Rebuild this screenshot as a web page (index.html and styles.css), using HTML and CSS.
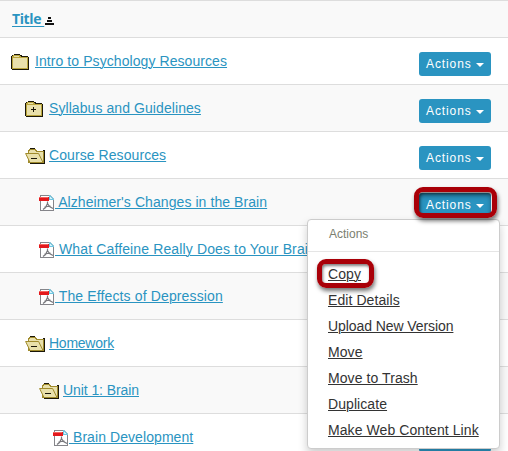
FILE: index.html
```html
<!DOCTYPE html>
<html lang="en">
<head>
<meta charset="utf-8">
<title>Resources</title>
<link rel="stylesheet" href="styles.css">
</head>
<body>
<svg class="defs" shape-rendering="crispEdges">
  <symbol id="folder" viewBox="0 0 18 16">
    <path fill="#1a1608" d="M3 0h6v1h2v1h6v1h1v13H1v-1H0V2h1V1h2z"/>
    <path fill="#b9a53c" d="M2 1h7v1h1v1h7v12H1V2h1z"/>
    <path fill="#e9e0ab" d="M2 4h14v10H2zM3 2h5v1H3z"/>
  </symbol>
  <symbol id="folder-plus" viewBox="0 0 18 16">
    <use href="#folder" width="18" height="16"/>
    <path fill="#1a1608" d="M6 8h5v1H6zM8 6h1v5H8z"/>
  </symbol>
  <symbol id="folder-open" viewBox="0 0 20 16">
    <path fill="#1a1608" d="M5 0h5v1H5zM18 2h2v14H5v-1h13z"/>
    <path fill="#a08b2c" d="M3 2h1V1h7v1h1v1h7v12H3z"/>
    <path fill="#e9e0ab" d="M4 3h1V2h5v1h1v1h7v10H4z"/>
    <path class="flap" d="M.6 5.500h13l4.400 9H5z"/>
    <path fill="#1a1608" d="M6 10h6v1H6z"/>
  </symbol>
  <symbol id="pdf" viewBox="0 0 15 16">
    <path fill="#85858a" d="M1 0h10l4 4v12H1z"/>
    <path fill="#fff" d="M2 1h8v4h4v10H2z"/>
    <path fill="#6fc5e0" d="M10 0h1l4 4v1h-5z"/>
    <path fill="#d8f3fa" d="M11 2h1v1h1v1h-2z"/>
    <path fill="#e3191d" d="M0 2h10v4H0z"/>
    <path fill="#f4645f" d="M0 2h9v1H0z"/>
    <path class="swash" d="M8.500 6.500v2l-2 4-2.500 2M8.500 8.500l2 3 3.500 2M5.500 12l6-1"/>
  </symbol>
</svg>
<main class="table">
  <header class="head"><a href="#">Title&nbsp;</a><svg class="sort" viewBox="0 0 9 8" shape-rendering="crispEdges"><path d="M3 0h3v2H3zM2 3h5v2H2zM0 6h9v2H0z"/></svg></header>
  <div class="row"><svg class="closed"><use href="#folder"/></svg><a href="#">Intro to Psychology Resources</a><button>Actions<i></i></button></div>
  <div class="row level1"><svg class="closed"><use href="#folder-plus"/></svg><a href="#">Syllabus and Guidelines</a><button>Actions<i></i></button></div>
  <div class="row level1"><svg class="open"><use href="#folder-open"/></svg><a href="#">Course Resources</a><button>Actions<i></i></button></div>
  <div class="row level2"><svg class="pdf"><use href="#pdf"/></svg><a href="#"> Alzheimer's Changes in the Brain</a>
    <div class="anchor"><button class="active">Actions<i></i></button><span class="ring"></span>
      <div class="menu">
        <h2>Actions</h2>
        <ul>
          <li><a href="#">Copy</a><span class="ring copy"></span></li>
          <li><a href="#">Edit Details</a></li>
          <li><a class="tight" href="#">Upload New Version</a></li>
          <li><a href="#">Move</a></li>
          <li><a href="#">Move to Trash</a></li>
          <li><a href="#">Duplicate</a></li>
          <li><a href="#">Make Web Content Link</a></li>
        </ul>
      </div>
    </div>
  </div>
  <div class="row level2"><svg class="pdf"><use href="#pdf"/></svg><a class="wide" href="#"> What Caffeine Really Does to Your Brain</a></div>
  <div class="row level2"><svg class="pdf"><use href="#pdf"/></svg><a class="wide" href="#"> The Effects of Depression</a></div>
  <div class="row level1"><svg class="open"><use href="#folder-open"/></svg><a class="tighter" href="#">Homework</a></div>
  <div class="row level2"><svg class="open"><use href="#folder-open"/></svg><a class="tight" href="#">Unit 1: Brain</a></div>
  <div class="row level3"><svg class="pdf"><use href="#pdf"/></svg><a href="#"> Brain Development</a><button></button></div>
</main>
</body>
</html>
```
FILE: styles.css
```css
* { box-sizing: border-box; }
body { margin: 0; height: 451px; overflow: hidden; background: #fff; font: 14px/20px "Liberation Sans", Arial, sans-serif; letter-spacing: .075px; }
.defs { position: absolute; width: 0; height: 0; }
.swash { fill: none; stroke: #77777c; stroke-width: 1.2; shape-rendering: auto; }
.flap { fill: #e9e0ab; stroke: #a08b2c; shape-rendering: auto; }
.table { width: 508px; }
.head { display: flex; height: 37px; padding: 8px 0 0 12px; border-top: 1px solid #ddd; background: #f9f9f9; box-sizing: content-box; height: 28px; }
.head a { font: bold 14px/20px "Open Sans", sans-serif; letter-spacing: -.4px; text-underline-offset: 2px; }
.sort { width: 9px; height: 8px; margin: 8px 0 0 1px; fill: #111; }
a { color: #2a94c1; text-decoration: underline; text-decoration-thickness: 1px; text-underline-offset: 1px; white-space: pre; }
.wide { letter-spacing: .13px; }
.tight { letter-spacing: -.08px; }
.tighter { letter-spacing: -.25px; }
.row { display: flex; align-items: flex-start; height: 47px; padding: 13px 17px 0 11px; border-top: 1px solid #ddd; }
.row:nth-child(odd) { background: #f9f9f9; }
.level1 { padding-left: 25px; }
.level2 { padding-left: 39px; }
.level3 { padding-left: 53px; }
.row svg { flex: none; height: 16px; margin-top: 3px; }
.closed { width: 18px; margin-right: 6px; }
.open { width: 20px; margin-right: 4px; }
.row .pdf { width: 15px; margin: 3px 1px 0 0; }
button { display: flex; align-items: center; width: 72px; height: 24px; margin: 1px 0 0 auto; padding: 0 7px; border: 0; border-radius: 3px; background: #2a94c1; color: #fff; font: 12px/24px "Liberation Sans", Arial, sans-serif; letter-spacing: .9px; }
button i { margin: 2px 0 0 4px; border: 4px solid transparent; border-top-color: #fff; border-bottom: 0; }
.anchor { position: relative; margin-left: auto; }
.active { box-shadow: inset 0 3px 5px rgba(0,0,0,.35); }
.ring { position: absolute; left: -5px; top: -5px; width: 83px; height: 31px; border: 5px solid #a90008; border-radius: 9px; box-shadow: 1px 3px 4px rgba(0,0,0,.55), inset 1px 2px 3px rgba(0,0,0,.5); z-index: 3; }
.menu { position: absolute; right: -9px; top: 27px; width: 193px; height: 230px; border: 1px solid #ccc; border-radius: 4px; background: #fff; box-shadow: 0 5px 10px rgba(0,0,0,.2); z-index: 2; }
h2 { height: 32px; margin: 0; padding: 4px 0 0 21px; border-bottom: 1px solid #e5e5e5; color: #7b806f; font: 12px/20px "Liberation Sans", Arial, sans-serif; letter-spacing: 0; }
ul { margin: 0; padding: 9px 0 0 20px; list-style: none; }
li { position: relative; height: 26px; padding-top: 3px; }
li a { color: #333; }
.copy { left: -11px; top: -2px; width: 57px; height: 29px; }
```
